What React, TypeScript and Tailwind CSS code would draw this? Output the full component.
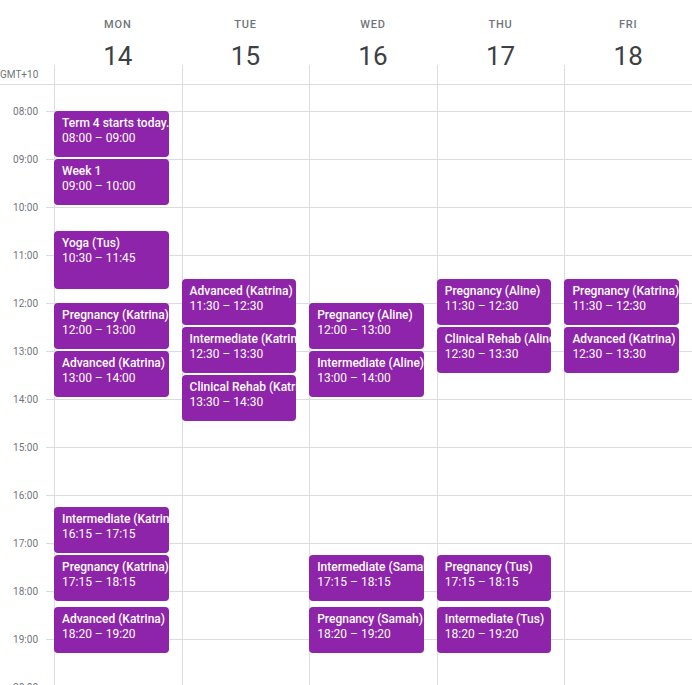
type Ev = { title: string; start: string; end: string };

const DAYS: { name: string; date: number; events: Ev[] }[] = [
  {
    name: "MON",
    date: 14,
    events: [
      { title: "Term 4 starts today.", start: "08:00", end: "09:00" },
      { title: "Week 1", start: "09:00", end: "10:00" },
      { title: "Yoga (Tus)", start: "10:30", end: "11:45" },
      { title: "Pregnancy (Katrina)", start: "12:00", end: "13:00" },
      { title: "Advanced (Katrina)", start: "13:00", end: "14:00" },
      { title: "Intermediate (Katrina)", start: "16:15", end: "17:15" },
      { title: "Pregnancy (Katrina)", start: "17:15", end: "18:15" },
      { title: "Advanced (Katrina)", start: "18:20", end: "19:20" },
    ],
  },
  {
    name: "TUE",
    date: 15,
    events: [
      { title: "Advanced (Katrina)", start: "11:30", end: "12:30" },
      { title: "Intermediate (Katrina)", start: "12:30", end: "13:30" },
      { title: "Clinical Rehab (Katrina)", start: "13:30", end: "14:30" },
    ],
  },
  {
    name: "WED",
    date: 16,
    events: [
      { title: "Pregnancy (Aline)", start: "12:00", end: "13:00" },
      { title: "Intermediate (Aline)", start: "13:00", end: "14:00" },
      { title: "Intermediate (Samah)", start: "17:15", end: "18:15" },
      { title: "Pregnancy (Samah)", start: "18:20", end: "19:20" },
    ],
  },
  {
    name: "THU",
    date: 17,
    events: [
      { title: "Pregnancy (Aline)", start: "11:30", end: "12:30" },
      { title: "Clinical Rehab (Aline)", start: "12:30", end: "13:30" },
      { title: "Pregnancy (Tus)", start: "17:15", end: "18:15" },
      { title: "Intermediate (Tus)", start: "18:20", end: "19:20" },
    ],
  },
  {
    name: "FRI",
    date: 18,
    events: [
      { title: "Pregnancy (Katrina)", start: "11:30", end: "12:30" },
      { title: "Advanced (Katrina)", start: "12:30", end: "13:30" },
    ],
  },
];

const HOURS = [8, 9, 10, 11, 12, 13, 14, 15, 16, 17, 18, 19, 20];
const HOUR_PX = 48;
const OFFSET = 26; // visible slice above 08:00

function toHours(t: string) {
  const [h, m] = t.split(":").map(Number);
  return h + m / 60;
}

function pad(h: number) {
  return `${h < 10 ? "0" : ""}${h}:00`;
}

function EventChip({ ev }: { ev: Ev }) {
  const s = toHours(ev.start);
  const e = toHours(ev.end);
  return (
    <div
      className="absolute left-[-1px] right-[13px] rounded-[4px] bg-[#8e24aa] pl-2 pt-[5px] text-[12px] leading-[14.5px] text-white overflow-hidden whitespace-nowrap"
      style={{ top: OFFSET + (s - 8) * HOUR_PX, height: (e - s) * HOUR_PX - 2 }}
    >
      <div className="font-medium">{ev.title}</div>
      <div>
        {ev.start} – {ev.end}
      </div>
    </div>
  );
}

export default function App() {
  return (
    <div className="w-[692px] h-[685px] overflow-hidden bg-white font-['Roboto',sans-serif]">
      <div className="flex h-[85px] border-b border-[#dadce0]">
        <div className="w-[54px] shrink-0 flex flex-col justify-end pb-[3px]">
          <span className="w-[38px] text-right text-[10px] leading-[12px] text-[#70757a] whitespace-nowrap">
            GMT+10
          </span>
        </div>
        {DAYS.map((d) => (
          <div key={d.name} className="flex-1 min-w-0 flex flex-col items-center pt-[17px]">
            <span className="text-[11px] leading-4 font-medium tracking-[0.8px] text-[#70757a]">
              {d.name}
            </span>
            <span className="mt-[14px] text-[26px] leading-[18px] text-[#3c4043]">{d.date}</span>
            <div className="mt-auto h-5 self-stretch border-l border-[#dadce0]" />
          </div>
        ))}
      </div>

      <div className="flex h-[600px]">
        <div className="w-[54px] shrink-0">
          <div className="h-[26px]" />
          {HOURS.map((h) => (
            <div key={h} className="flex h-12">
              <span className="w-[46px] pr-2 -mt-[6px] text-right text-[10px] leading-[14px] text-[#70757a]">
                {pad(h)}
              </span>
              <div className="w-2 border-t border-[#dadce0]" />
            </div>
          ))}
        </div>
        {DAYS.map((d) => (
          <div key={d.name} className="relative flex-1 min-w-0 border-l border-[#dadce0]">
            <div className="h-[26px]" />
            {HOURS.map((h) => (
              <div key={h} className="h-12 border-t border-[#dadce0]" />
            ))}
            {d.events.map((ev, i) => (
              <EventChip key={i} ev={ev} />
            ))}
          </div>
        ))}
      </div>
    </div>
  );
}
